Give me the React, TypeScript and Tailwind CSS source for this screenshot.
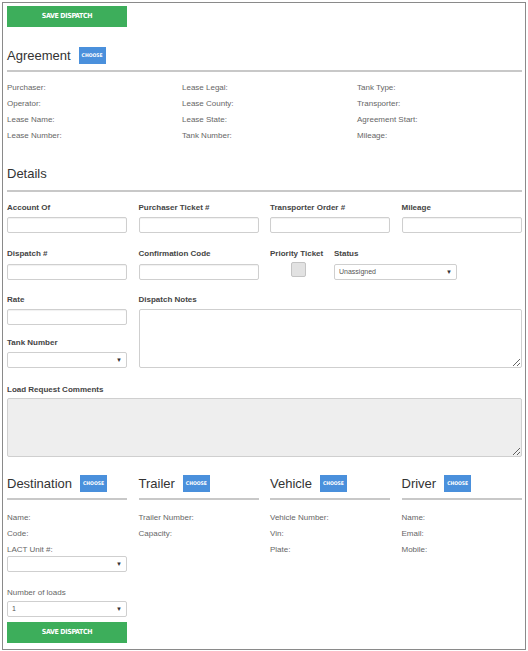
import React from 'react';

const inputCls = 'block w-[120px] h-[16px] bg-white border border-[#cfcfcf] rounded-[2px] shadow-[inset_0_1px_1px_rgba(0,0,0,0.06)]';

const SaveButton = () => (
  <button className="flex items-center justify-center w-[120px] h-[21px] bg-[#3dae5b] text-white text-[7px] font-bold font-['DejaVu_Sans_Condensed',sans-serif] tracking-tighter uppercase">
    Save Dispatch
  </button>
);

const Choose = () => (
  <span className="inline-flex items-center justify-center w-[27px] h-[17px] bg-[#4a90dc] text-white text-[5px] font-bold font-['DejaVu_Sans_Condensed',sans-serif] uppercase">
    Choose
  </span>
);

const Heading = ({ title }: { title: string }) => (
  <div>
    <div className="flex items-center gap-[8px] h-[17px]">
      <span className="text-[13px] text-[#333] leading-none">{title}</span>
      <Choose />
    </div>
    <div className="mt-[6px] h-[2px] w-[120px] bg-[#c8c8c8]" />
  </div>
);

const Select = ({ value = '', w = 'w-[120px]' }: { value?: string; w?: string }) => (
  <div className={`flex items-center justify-between h-[16px] ${w} bg-white border border-[#cfcfcf] rounded-[2px] px-[4px]`}>
    <span className="text-[7px] text-[#555]">{value}</span>
    <span className="text-[6px] text-[#333]">▼</span>
  </div>
);

const Label = ({ children }: { children: React.ReactNode }) => (
  <div className="text-[8px] font-bold text-[#444] leading-[12px] whitespace-nowrap">{children}</div>
);

const Info = ({ items }: { items: string[] }) => (
  <div>
    {items.map((t) => (
      <div key={t} className="text-[8px] text-[#666] leading-[16px]">{t}</div>
    ))}
  </div>
);

export default function App() {
  return (
    <div className="p-[2px] bg-white font-['Liberation_Sans',Arial,sans-serif]">
      <div className="w-[524px] h-[648px] border border-[#8a8a8a] pl-[4px] pr-[3px] pt-[3px]">
        <SaveButton />

        <div className="mt-[20px]">
          <div className="flex items-center gap-[8px] h-[17px]">
            <span className="text-[13px] text-[#333] leading-none">Agreement</span>
            <Choose />
          </div>
          <div className="mt-[6px] h-[2px] bg-[#c8c8c8]" />
        </div>

        <div className="mt-[8px] grid grid-cols-[175px_175px_1fr]">
          <Info items={['Purchaser:', 'Operator:', 'Lease Name:', 'Lease Number:']} />
          <Info items={['Lease Legal:', 'Lease County:', 'Lease State:', 'Tank Number:']} />
          <Info items={['Tank Type:', 'Transporter:', 'Agreement Start:', 'Mileage:']} />
        </div>

        <div className="mt-[21px]">
          <div className="h-[17px] flex items-center">
            <span className="text-[13px] text-[#333] leading-none">Details</span>
          </div>
          <div className="mt-[8px] h-[2px] bg-[#c8c8c8]" />
        </div>

        <div className="mt-[10px] grid grid-cols-4 gap-x-[11px]">
          {['Account Of', 'Purchaser Ticket #', 'Transporter Order #', 'Mileage'].map((l) => (
            <div key={l}>
              <Label>{l}</Label>
              <div className={`mt-[3px] ${inputCls}`} />
            </div>
          ))}
        </div>

        <div className="mt-[15px] grid grid-cols-4 gap-x-[11px]">
          <div>
            <Label>Dispatch #</Label>
            <div className={`mt-[4px] ${inputCls}`} />
          </div>
          <div>
            <Label>Confirmation Code</Label>
            <div className={`mt-[4px] ${inputCls}`} />
          </div>
          <div className="col-span-2 flex">
            <div className="w-[64px]">
              <Label>Priority Ticket</Label>
              <div className="mt-[2px] ml-[21px] w-[15px] h-[15px] bg-[#e2e2e2] border border-[#c4c4c4] rounded-[2px]" />
            </div>
            <div>
              <Label>Status</Label>
              <div className="mt-[4px]">
                <Select value="Unassigned" w="w-[123px]" />
              </div>
            </div>
          </div>
        </div>

        <div className="mt-[14px] grid grid-cols-4 gap-x-[11px]">
          <div>
            <Label>Rate</Label>
            <div className={`mt-[3px] ${inputCls}`} />
            <div className="mt-[12px]">
              <Label>Tank Number</Label>
              <div className="mt-[3px]">
                <Select />
              </div>
            </div>
          </div>
          <div className="col-span-3">
            <Label>Dispatch Notes</Label>
            <textarea className="mt-[3px] block w-full h-[59px] bg-white border border-[#cfcfcf] rounded-[2px] resize-y" />
          </div>
        </div>

        <div className="mt-[16px]">
          <Label>Load Request Comments</Label>
          <textarea disabled className="mt-[2px] block w-full h-[59px] bg-[#eeeeee] border border-[#cfcfcf] rounded-[2px] resize-y" />
        </div>

        <div className="mt-[18px] grid grid-cols-4 gap-x-[11px]">
          <div>
            <Heading title="Destination" />
            <div className="mt-[10px]">
              <Info items={['Name:', 'Code:', 'LACT Unit #:']} />
            </div>
            <div className="mt-[-2px]">
              <Select />
            </div>
            <div className="mt-[13px] text-[8px] text-[#666] leading-[16px]">Number of loads</div>
            <div className="mt-[0px]">
              <Select value="1" />
            </div>
            <div className="mt-[5px]">
              <SaveButton />
            </div>
          </div>
          <div>
            <Heading title="Trailer" />
            <div className="mt-[10px]">
              <Info items={['Trailer Number:', 'Capacity:']} />
            </div>
          </div>
          <div>
            <Heading title="Vehicle" />
            <div className="mt-[10px]">
              <Info items={['Vehicle Number:', 'Vin:', 'Plate:']} />
            </div>
          </div>
          <div>
            <Heading title="Driver" />
            <div className="mt-[10px]">
              <Info items={['Name:', 'Email:', 'Mobile:']} />
            </div>
          </div>
        </div>
      </div>
    </div>
  );
}
